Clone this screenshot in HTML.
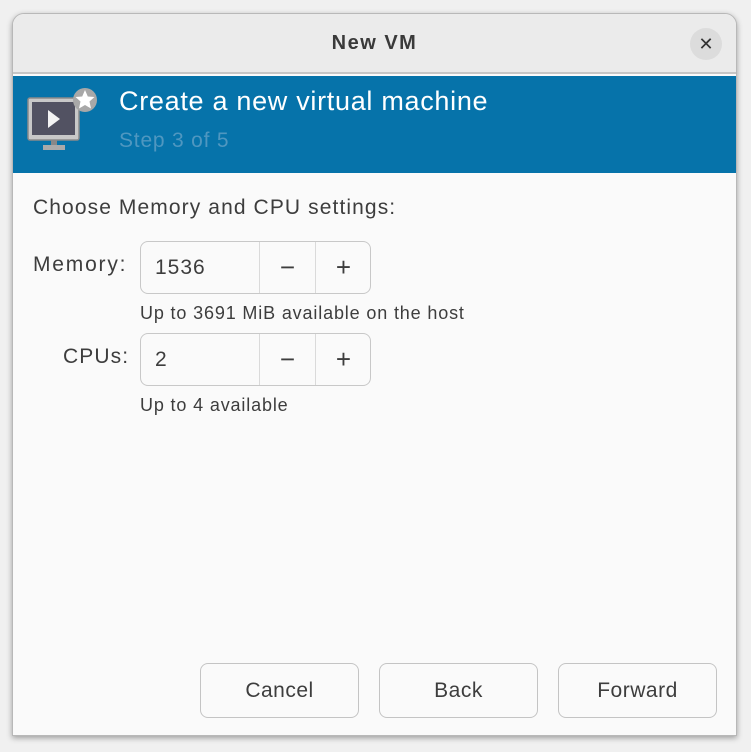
<!DOCTYPE html>
<html><head><meta charset="utf-8"><style>
*{box-sizing:border-box;margin:0;padding:0}
body{width:751px;height:752px;background:#f0f0f0;font-family:"Liberation Sans",sans-serif;position:relative;overflow:hidden;color:#3d3d3d}
.win{position:absolute;left:12px;top:13px;width:725px;height:723px;background:#fafafa;border:1px solid #b8b8b8;border-radius:12px 12px 0 0;box-shadow:0 2px 6px rgba(0,0,0,.35);overflow:hidden}
.hb{position:absolute;left:0;top:0;width:100%;height:60px;background:#ebebeb;border-bottom:2px solid #c6c6c6}
.title{position:absolute;left:0;right:0;top:18px;text-align:center;font-weight:bold;font-size:20px;letter-spacing:1.5px;color:#3a3a3a}
.close{position:absolute;left:677px;top:14px;width:32px;height:32px;border-radius:50%;background:#dcdcdc;text-align:center;line-height:32px;font-size:18px;color:#333}
.ban{position:absolute;left:0;top:62px;width:100%;height:97px;background:#0673aa}
.h1{position:absolute;left:106px;top:10px;font-size:27px;letter-spacing:0.7px;color:#fff}
.h2{position:absolute;left:106px;top:53px;font-size:21px;letter-spacing:0.8px;color:#4f97c0}
.t{position:absolute;font-size:21px;letter-spacing:1.1px;color:#3d3d3d}
.s{position:absolute;font-size:18px;letter-spacing:0.85px;color:#3d3d3d}
.spin{position:absolute;left:127px;width:231px;height:53px;border:1px solid #c8c8c8;border-radius:8px;background:#fafafa}
.spin .v{position:absolute;left:14px;top:14px;font-size:21px;letter-spacing:1px}
.spin .m,.spin .p{position:absolute;top:0;width:56px;height:51px;border-left:1px solid #dadada;text-align:center;line-height:51px;font-size:26px;font-weight:300;color:#3d3d3d}
.spin .m{left:118px}.spin .p{left:174px}
.btn{position:absolute;top:649px;width:159px;height:55px;border:1px solid #c4c4c4;border-radius:8px;background:#fafafa;text-align:center;line-height:53px;font-size:21px;letter-spacing:0.5px;color:#3d3d3d}
</style></head><body>
<div class="win">
 <div class="hb"><div class="title">New VM</div><div class="close">✕</div></div>
 <div class="ban">
  <svg style="position:absolute;left:13px;top:8px" width="78" height="70" viewBox="0 0 78 70">
   <rect x="2" y="14" width="51" height="42" rx="2" fill="#c8c8c8" stroke="#8a8a8a" stroke-width="1.5"/>
   <rect x="6" y="18" width="43" height="33" fill="#525262"/>
   <polygon points="22,26 22,44 34,35" fill="#f4f4f4"/>
   <rect x="25" y="56" width="6" height="5" fill="#888"/>
   <rect x="17" y="61" width="22" height="5" fill="#aaa"/>
   <circle cx="59" cy="16" r="12" fill="#a8a8a8"/>
   <polygon points="59,6 61.8,12.5 68.5,13 63.5,17.5 65,24.5 59,21 53,24.5 54.5,17.5 49.5,13 56.2,12.5" fill="#fff"/>
  </svg>
  <div class="h1">Create a new virtual machine</div>
  <div class="h2">Step 3 of 5</div>
 </div>
 <div class="t" style="left:20px;top:182px">Choose Memory and CPU settings:</div>
 <div class="t" style="left:20px;top:239px;letter-spacing:1.8px">Memory:</div>
 <div class="spin" style="top:227px"><div class="v">1536</div><div class="m">−</div><div class="p">+</div></div>
 <div class="s" style="left:127px;top:289px">Up to 3691 MiB available on the host</div>
 <div class="t" style="left:50px;top:331px">CPUs:</div>
 <div class="spin" style="top:319px"><div class="v">2</div><div class="m">−</div><div class="p">+</div></div>
 <div class="s" style="left:127px;top:381px">Up to 4 available</div>
 <div class="btn" style="left:187px">Cancel</div>
 <div class="btn" style="left:366px">Back</div>
 <div class="btn" style="left:545px">Forward</div>
</div>
</body></html>
